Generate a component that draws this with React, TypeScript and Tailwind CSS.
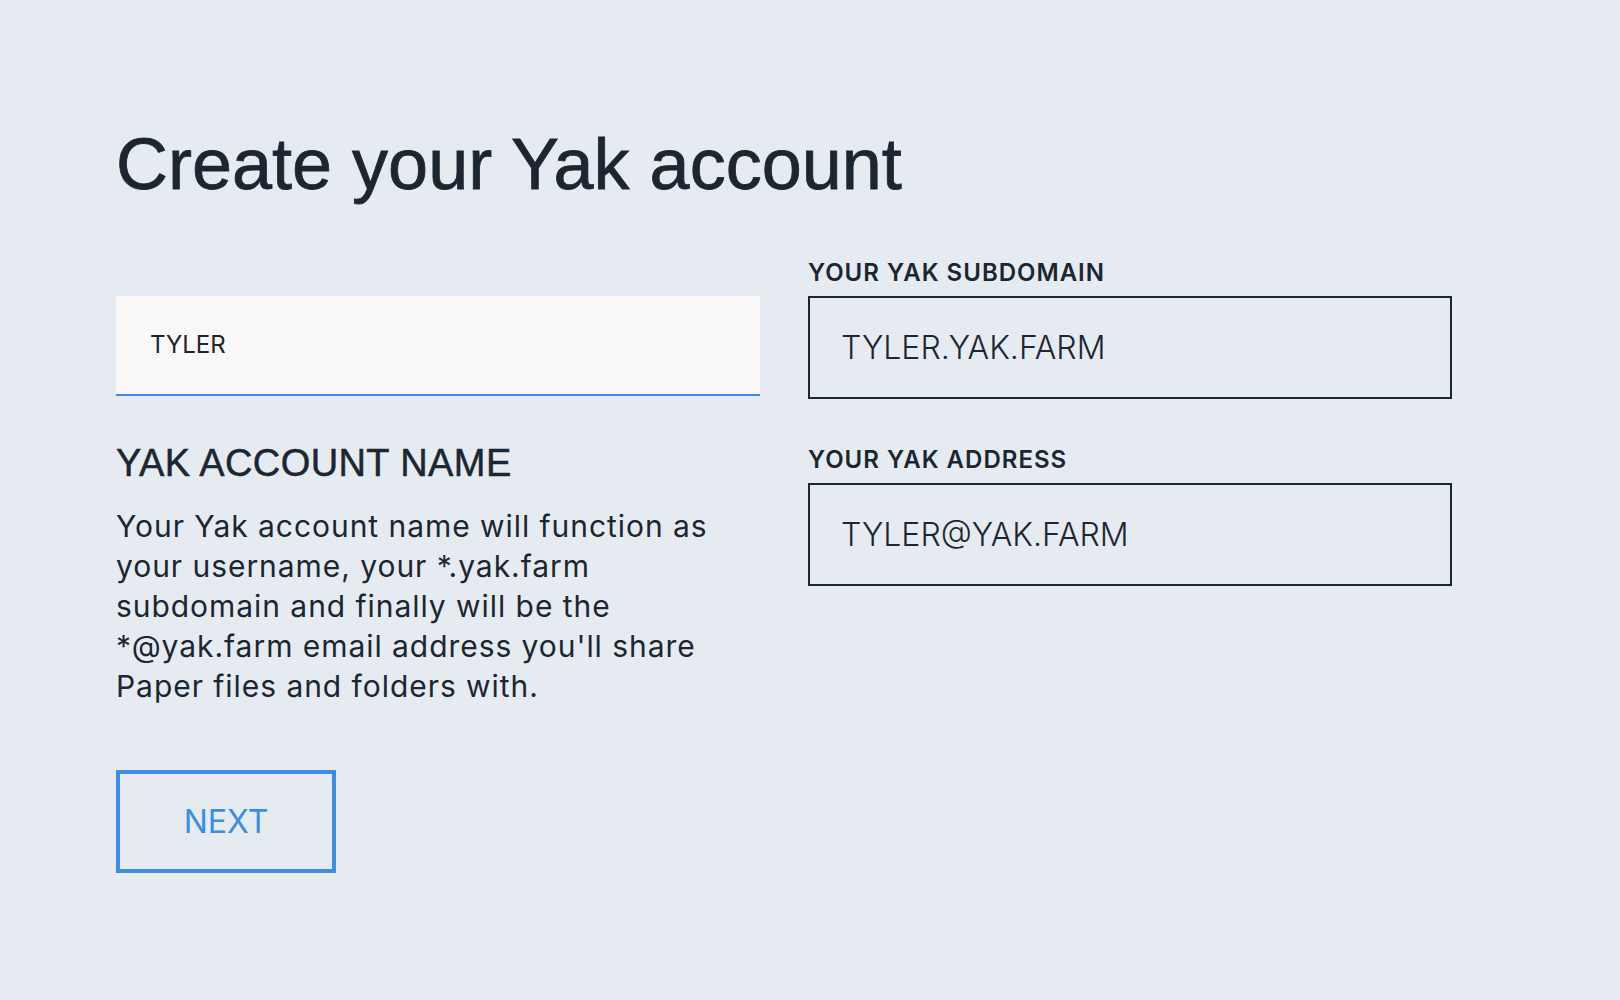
import React from 'react';

const sans = { fontFamily: 'Inter, "Liberation Sans", sans-serif' };

function ReadOnlyField({ label, value }: { label: string; value: string }) {
  return (
    <div className="flex flex-col">
      <label className="text-[24px] leading-[32px] font-semibold tracking-[1px] text-[#1c2631]">{label}</label>
      <div className="mt-[7px] flex h-[103px] items-center border-2 border-[#1c2631] pl-[31px] text-[32px] font-light text-[#1c2631]">
        {value}
      </div>
    </div>
  );
}

export default function App() {
  return (
    <div className="min-h-screen bg-[#e6ebf2] pl-[116px] pt-[129px] text-[#1c2631]" style={sans}>
      {/* Page title */}
      <h1 className="font-['Liberation_Sans',sans-serif] text-[72px] leading-[71px] [-webkit-text-stroke:0.8px_#1c2631]">
        Create your Yak account
      </h1>

      <div className="mt-[57px] flex gap-[48px]">
        {/* Left column: account name input + description */}
        <div className="flex w-[644px] flex-col pt-[39px]">
          <div className="flex h-[100px] items-center border-b-2 border-[#3b8ee5] bg-[#faf8f9] pl-[34px] text-[24px]">
            TYLER
          </div>

          <h2 className="mt-[44px] font-['Liberation_Sans',sans-serif] text-[38px] leading-[46px] tracking-[0.4px] [-webkit-text-stroke:0.5px_#1c2631]">
            YAK ACCOUNT NAME
          </h2>
          <p className="mt-[20px] w-[614px] text-[30px] leading-[40px] tracking-[0.95px]">
            Your Yak account name will function as your username, your *.yak.farm subdomain and finally will be the
            *@yak.farm email address you'll share Paper files and folders with.
          </p>

          <button className="mt-[64px] flex h-[103px] w-[220px] items-center justify-center border-4 border-[#3b8ee5] text-[32px] text-[#3b8ee5]">
            NEXT
          </button>
        </div>

        {/* Right column: derived values */}
        <div className="flex w-[644px] flex-col gap-[45px]">
          <ReadOnlyField label="YOUR YAK SUBDOMAIN" value="TYLER.YAK.FARM" />
          <ReadOnlyField label="YOUR YAK ADDRESS" value="TYLER@YAK.FARM" />
        </div>
      </div>
    </div>
  );
}
